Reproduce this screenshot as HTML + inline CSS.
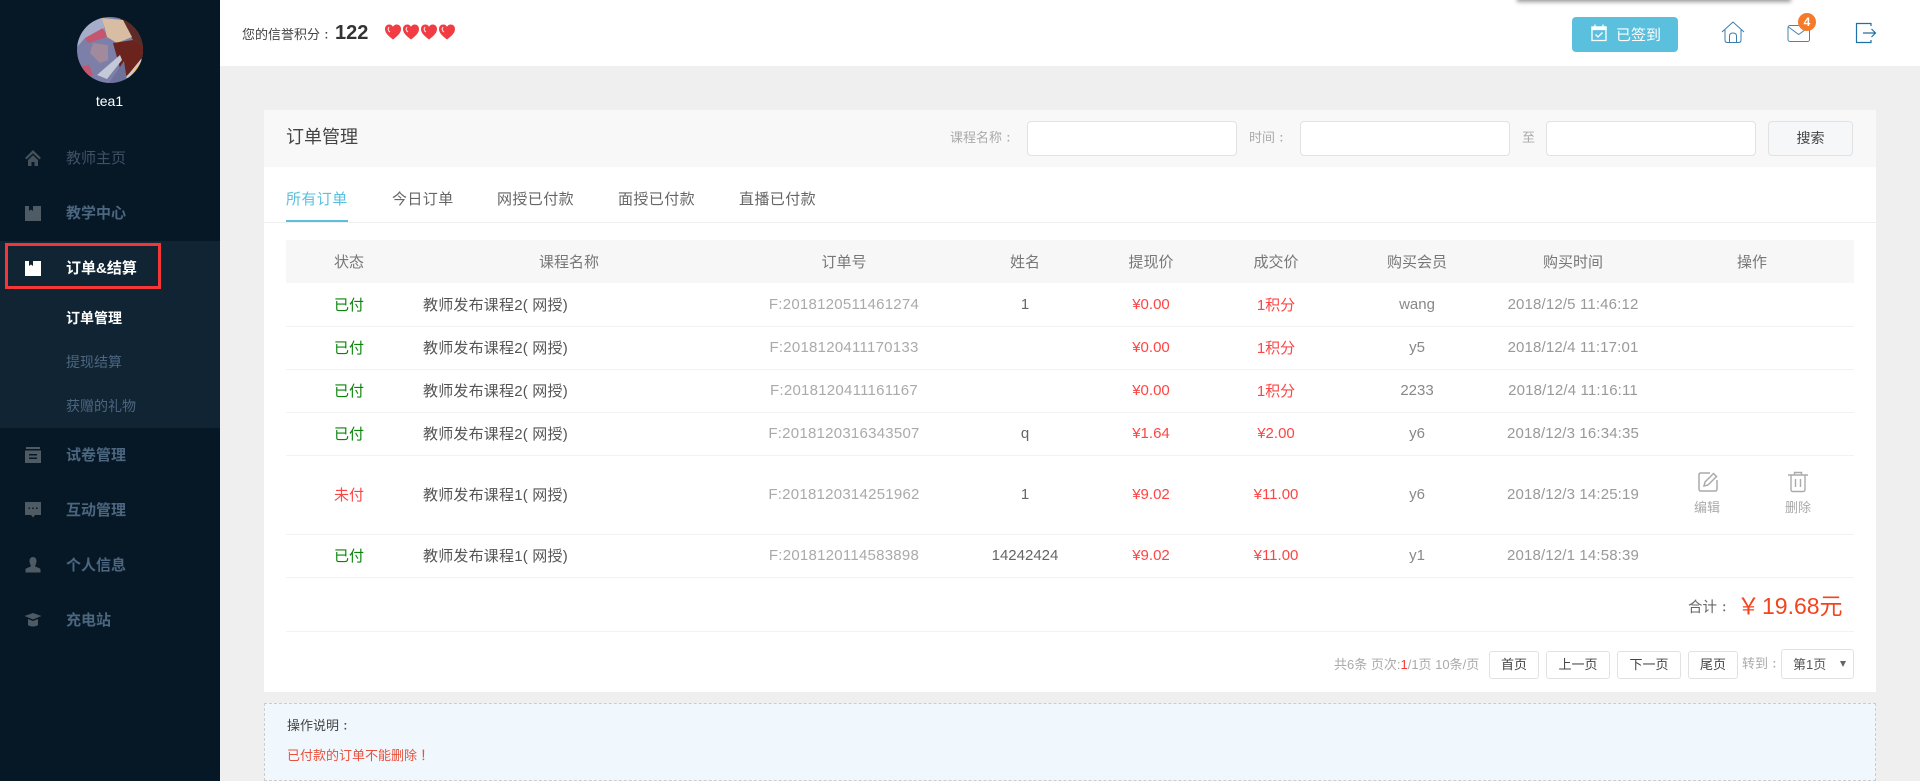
<!DOCTYPE html>
<html lang="zh"><head><meta charset="utf-8"><title>订单管理</title>
<style>
*{box-sizing:border-box;margin:0;padding:0}
html,body{width:1920px;height:781px;overflow:hidden;background:#efefef;font-family:"Liberation Sans","Noto Sans CJK SC",sans-serif;font-size:14px;color:#555}
.a{position:absolute;white-space:nowrap}
.k{font-family:"IPAGothic",sans-serif}
#side{position:absolute;left:0;top:0;width:220px;height:781px;background:#061825}
#act{position:absolute;left:0;top:241px;width:220px;height:187px;background:#102433}
.m{position:absolute;left:66px;font-size:15px;line-height:22px;color:#4c6680;white-space:nowrap}
.s{position:absolute;left:66px;font-size:14px;line-height:20px;color:#4c6680;white-space:nowrap}
.ic{position:absolute;left:24px;width:18px;height:18px}
#top{position:absolute;left:220px;top:0;width:1700px;height:66px;background:#fff}
#card{position:absolute;left:264px;top:110px;width:1612px;height:582px;background:#fff}
#hd{position:absolute;left:0;top:0;width:1612px;height:57px;background:#f8f8f8}
.inp{position:absolute;top:121px;height:35px;width:210px;background:#fff;border:1px solid #e2e2e2;border-radius:4px}
.lb{position:absolute;top:129px;font-size:13px;line-height:18px;color:#aaa;white-space:nowrap}
.tab{position:absolute;top:189px;font-size:15px;line-height:22px;color:#666;white-space:nowrap;letter-spacing:.4px}
table{position:absolute;left:286px;top:240px;width:1568px;border-collapse:collapse;table-layout:fixed;font-size:15px}
th{height:43px;background:#f7f7f7;font-weight:normal;color:#777;text-align:center;padding:0}
td{height:43px;text-align:center;border-bottom:1px solid #f2f2f2;padding:0;color:#999;white-space:nowrap}
td.g{color:#0a850a}td.r{color:#f44}td.c{text-align:left;padding-left:11px;color:#555;letter-spacing:.2px}
td.o{color:#aaa;letter-spacing:.25px}td.n{color:#666}td.u{color:#888}td.d{color:#999;font-size:15px;letter-spacing:.15px}
.pb{position:absolute;top:651px;height:28px;background:#fff;border:1px solid #e2e2e2;border-radius:3px;text-align:center;font-size:13px;line-height:26px;color:#444}
</style></head><body>
<div id="side">
  <div id="act"></div>
  <svg class="a" style="left:77px;top:17px" width="66" height="66" viewBox="0 0 66 66">
    <defs><clipPath id="c"><circle cx="33" cy="33" r="33"/></clipPath></defs>
    <g clip-path="url(#c)">
      <rect width="66" height="66" fill="#7c80a8"/>
      <path d="M0 0H26L28 20L8 21L0 30Z" fill="#a6adc8"/>
      <path d="M42 0H70V30L56 23L50 12Z" fill="#5e2a26"/>
      <path d="M25 1L46 3L55 20L40 26L30 20Z" fill="#d8bda2"/>
      <path d="M36 26L56 23L70 30V40L46 62Z" fill="#6b241d"/>
      <path d="M50 62L66 40H70V66H50Z" fill="#f2b320"/>
      <path d="M46 64L64 42L65 44L48 66Z" fill="#d9c8c8"/>
      <path d="M8 21L26 11L30 20L11 26Z" fill="#c4566f"/>
      <path d="M16 26L31 28L31 43L23 46L13 36Z" fill="#a08a9c"/>
      <path d="M20 58L43 38L45 43L30 62Z" fill="#c4c9d8"/>
      <path d="M32 66L47 44L50 64L44 70Z" fill="#6c7299"/>
      <path d="M4 50L12 48L16 58L8 62Z" fill="#c4566f"/>
    </g>
  </svg>
  <div class="a" style="left:0;width:219px;top:92px;text-align:center;font-size:14px;line-height:18px;color:#fff">tea1</div>

  <svg class="ic" style="top:149px" viewBox="0 0 18 18"><path d="M9 1L1 9l1.600 1.400L9 4.400l6.400 6L17 9zM4 11v6h3.500v-4h3v4H14v-6L9 6.200z" fill="#45525c"/></svg>
  <div class="m" style="top:148px;color:#3f5166">教师主页</div>
  <svg class="ic" style="top:204px" viewBox="0 0 18 18"><path d="M1 2h4v5l2-1.500L9 7V2h8v15H1z" fill="#4e5a64"/></svg>
  <div class="m" style="top:203px;font-weight:bold">教学中心</div>
  <svg class="ic" style="top:259px" viewBox="0 0 18 18"><path d="M1 2h4v5l2-1.500L9 7V2h8v15H1z" fill="#fff"/></svg>
  <div class="m" style="top:258px;color:#fff;font-weight:bold">订单&amp;结算</div>
  <div class="a" style="left:5px;top:243px;width:156px;height:46px;border:3px solid #f33636"></div>
  <div class="s" style="top:308px;color:#fff;font-weight:bold">订单管理</div>
  <div class="s" style="top:352px">提现结算</div>
  <div class="s" style="top:396px">获赠的礼物</div>
  <svg class="ic" style="top:446px" viewBox="0 0 18 18"><path d="M2 1h14v2H2zM1 4.500h16V17H1zM5 8v1.500h8V8zM5 11.500V13h8v-1.500z" fill="#4e5a64" fill-rule="evenodd"/></svg>
  <div class="m" style="top:445px;font-weight:bold">试卷管理</div>
  <svg class="ic" style="top:501px" viewBox="0 0 18 18"><path d="M1 1h16v13h-6l-2 2.500L7 14H1zM4.500 6.500v1.500H6V6.500zM8.200 6.500v1.500h1.500V6.500zM12 6.500v1.500h1.500V6.500z" fill="#4e5a64" fill-rule="evenodd"/></svg>
  <div class="m" style="top:500px;font-weight:bold">互动管理</div>
  <svg class="ic" style="top:556px" viewBox="0 0 18 18"><path d="M9 1c2.500 0 3.500 2 3.500 4S11.500 9 11 10c0 1 4 1.500 5.500 3v3.500h-15V13C3 11.500 7 11 7 10 6.500 9 5.500 7 5.500 5S6.500 1 9 1z" fill="#4e5a64"/></svg>
  <div class="m" style="top:555px;font-weight:bold">个人信息</div>
  <svg class="ic" style="top:611px" viewBox="0 0 18 18"><path d="M9 2L.500 5 9 8.500 17.500 5zM4 8v6c2 2 8 2 10 0V8l-5 2z" fill="#4e5a64"/></svg>
  <div class="m" style="top:610px;font-weight:bold">充电站</div>
</div>

<div id="top"></div>
<div class="a" style="left:242px;top:25px;font-size:13px;line-height:20px;color:#444">您的信誉积分<span class="k">：</span></div>
<div class="a" style="left:335px;top:21px;font-size:20px;line-height:24px;font-weight:bold;color:#333">122</div>
<svg class="a" style="left:384px;top:23px" width="74" height="18" viewBox="0 0 74 18">
  <defs><path id="h" d="M9 16.500C4 12.500 1 10 1 6c0-2.800 2-4.500 4.300-4.500C7 1.500 8.300 2.500 9 3.800 9.700 2.500 11 1.500 12.700 1.500 15 1.500 17 3.200 17 6c0 4-3 6.500-8 10.500z" fill="#f03c42"/></defs>
  <use href="#h" x="0"/><use href="#h" x="18"/><use href="#h" x="36"/><use href="#h" x="54"/>
  <path d="M5 4Q3 7 6 9M23 4Q21 7 24 9M41 4Q39 7 42 9M59 4Q57 7 60 9" stroke="#ffd0d0" stroke-width="1.200" fill="none"/>
</svg>
<div class="a" style="left:1518px;top:-6px;width:272px;height:6px;box-shadow:0 1px 4px 1px rgba(0,0,0,.4);background:#999"></div>
<div class="a" style="left:1572px;top:17px;width:106px;height:35px;background:#5bc0de;border-radius:4px"></div>
<svg class="a" style="left:1590px;top:23px" width="18" height="19" viewBox="0 0 18 19" fill="none" stroke="#fff" stroke-width="1.300"><path d="M2 4h14v13.500H2z"/><path d="M2 4h14v2.500H2z" fill="#fff"/><path d="M5 1.500V4M13 1.500V4"/><path d="M5.500 11.500l2.500 2.500 4.500-4.500"/></svg>
<div class="a" style="left:1616px;top:25px;font-size:15px;line-height:22px;color:#fff">已签到</div>
<svg class="a" style="left:1721px;top:21px" width="24" height="23" viewBox="0 0 24 23" fill="none" stroke="#3a7cad" stroke-width="1"><path d="M1 11L12 1l11 10"/><path d="M4 9v10q0 2.500 2.500 2.500h11Q20 21.500 20 19V9"/><path d="M8.500 21.500V15q0-3 3.500-3t3.500 3v6.500"/></svg>
<svg class="a" style="left:1787px;top:24px" width="24" height="19" viewBox="0 0 24 19" fill="none" stroke="#4a84ad" stroke-width="1"><rect x="1" y="1.500" width="21.500" height="16" rx="2"/><path d="M1.500 3L11.700 10.500 22 3"/></svg>
<div class="a" style="left:1798px;top:13px;width:18px;height:18px;border-radius:50%;background:#f47b2a;color:#fff;font-weight:bold;font-size:12px;line-height:18px;text-align:center">4</div>
<svg class="a" style="left:1855px;top:22px" width="22" height="22" viewBox="0 0 22 22" fill="none" stroke="#1f6fa8" stroke-width="1.200"><path d="M16 4V1.500H1.500v19H16V18"/><path d="M8 11h12.500M16.500 7l4 4-4 4"/></svg>

<div id="card"><div id="hd"></div></div>
<div class="a" style="left:286px;top:124px;font-size:18px;line-height:26px;color:#444">订单管理</div>
<div class="lb" style="left:950px">课程名称<span class="k">：</span></div>
<div class="inp" style="left:1027px"></div>
<div class="lb" style="left:1249px">时间<span class="k">：</span></div>
<div class="inp" style="left:1300px"></div>
<div class="lb" style="left:1522px">至</div>
<div class="inp" style="left:1546px"></div>
<div class="a" style="left:1768px;top:121px;width:85px;height:35px;background:#f6f7f9;border:1px solid #e2e2e2;border-radius:4px;text-align:center;font-size:14px;line-height:33px;color:#444">搜索</div>

<div class="tab" style="left:286px;color:#5bc0de">所有订单</div>
<div class="tab" style="left:392px">今日订单</div>
<div class="tab" style="left:497px">网授已付款</div>
<div class="tab" style="left:618px">面授已付款</div>
<div class="tab" style="left:739px">直播已付款</div>
<div class="a" style="left:264px;top:222px;width:1612px;height:1px;background:#efefef"></div>
<div class="a" style="left:286px;top:220px;width:62px;height:2px;background:#5bc0de"></div>

<table>
<colgroup><col style="width:126px"><col style="width:314px"><col style="width:236px"><col style="width:126px"><col style="width:126px"><col style="width:124px"><col style="width:158px"><col style="width:154px"><col style="width:204px"></colgroup>
<tr><th>状态</th><th>课程名称</th><th>订单号</th><th>姓名</th><th>提现价</th><th>成交价</th><th>购买会员</th><th>购买时间</th><th>操作</th></tr>
<tr><td class="g" style="height:41px">已付</td><td class="c">教师发布课程2( 网授)</td><td class="o">F:2018120511461274</td><td class="n">1</td><td class="r">¥0.00</td><td class="r">1积分</td><td class="u">wang</td><td class="d">2018/12/5 11:46:12</td><td></td></tr>
<tr><td class="g">已付</td><td class="c">教师发布课程2( 网授)</td><td class="o">F:2018120411170133</td><td class="n"></td><td class="r">¥0.00</td><td class="r">1积分</td><td class="u">y5</td><td class="d">2018/12/4 11:17:01</td><td></td></tr>
<tr><td class="g">已付</td><td class="c">教师发布课程2( 网授)</td><td class="o">F:2018120411161167</td><td class="n"></td><td class="r">¥0.00</td><td class="r">1积分</td><td class="u">2233</td><td class="d">2018/12/4 11:16:11</td><td></td></tr>
<tr><td class="g">已付</td><td class="c">教师发布课程2( 网授)</td><td class="o">F:2018120316343507</td><td class="n">q</td><td class="r">¥1.64</td><td class="r">¥2.00</td><td class="u">y6</td><td class="d">2018/12/3 16:34:35</td><td></td></tr>
<tr><td class="r" style="height:79px">未付</td><td class="c">教师发布课程1( 网授)</td><td class="o">F:2018120314251962</td><td class="n">1</td><td class="r">¥9.02</td><td class="r">¥11.00</td><td class="u">y6</td><td class="d">2018/12/3 14:25:19</td><td></td></tr>
<tr><td class="g">已付</td><td class="c">教师发布课程1( 网授)</td><td class="o">F:2018120114583898</td><td class="n">14242424</td><td class="r">¥9.02</td><td class="r">¥11.00</td><td class="u">y1</td><td class="d">2018/12/1 14:58:39</td><td></td></tr>
</table>

<svg class="a" style="left:1698px;top:471px" width="20" height="21" viewBox="0 0 20 21" fill="none" stroke="#aaa" stroke-width="1.500"><path d="M12 2H3Q1 2 1 4v14q0 2 2 2h14q2 0 2-2V9"/><path d="M6 15l1-4L15.500 2.500l3 3L10 14z"/></svg>
<div class="a" style="left:1687px;top:498px;width:40px;text-align:center;font-size:13px;line-height:20px;color:#aaa">编辑</div>
<svg class="a" style="left:1787px;top:471px" width="22" height="22" viewBox="0 0 22 22" fill="none" stroke="#aaa" stroke-width="1.400"><path d="M1 4h20M7.500 4V1.500h7V4"/><path d="M4 4v14.500q0 2 2 2h10q2 0 2-2V4"/><path d="M8.500 8v8M13.500 8v8"/></svg>
<div class="a" style="left:1778px;top:498px;width:40px;text-align:center;font-size:13px;line-height:20px;color:#aaa">删除</div>

<div class="a" style="left:1688px;top:592px;line-height:30px;color:#666;font-size:14.500px">合计<span class="k">：</span></div>
<div class="a" style="left:1737px;top:591px;line-height:30px;color:#f4431f;font-size:23px">￥<span style="margin-left:2px">19.68元</span></div>
<div class="a" style="left:286px;top:631px;width:1568px;height:1px;background:#f2f2f2"></div>

<div class="a" style="left:1334px;top:655px;font-size:13px;line-height:20px;color:#aaa">共6条 页次:<span style="color:#f33">1</span>/1页 10条/页</div>
<div class="pb" style="left:1489px;width:50px">首页</div>
<div class="pb" style="left:1546px;width:64px">上一页</div>
<div class="pb" style="left:1617px;width:64px">下一页</div>
<div class="pb" style="left:1688px;width:50px">尾页</div>
<div class="a" style="left:1742px;top:654px;font-size:13px;line-height:20px;color:#aaa">转到<span class="k">：</span></div>
<div class="a" style="left:1781px;top:649px;width:73px;height:30px;background:#fff;border:1px solid #e2e2e2;border-radius:3px;font-size:13px;line-height:29px;color:#555;padding-left:11px">第1页</div>
<div class="a" style="left:1840px;top:661px;width:0;height:0;border-left:3.500px solid transparent;border-right:3.500px solid transparent;border-top:6px solid #666"></div>

<div class="a" style="left:264px;top:703px;width:1612px;height:78px;background:#f0f7fd;border:1px dashed #ccc"></div>
<div class="a" style="left:287px;top:716px;font-size:13px;line-height:20px;color:#444">操作说明<span class="k">：</span></div>
<div class="a" style="left:287px;top:746px;font-size:13px;line-height:20px;color:#e8513c">已付款的订单不能删除<span class="k">！</span></div>
</body></html>
